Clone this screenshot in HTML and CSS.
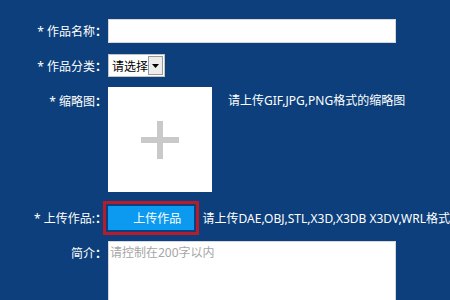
FILE: index.html
```html
<!DOCTYPE html>
<html lang="zh-CN">
<head>
<meta charset="utf-8">
<title>上传作品</title>
<link rel="stylesheet" href="styles.css">
</head>
<body>
<form class="form">
  <div class="row r-name">
    <label class="lbl">* 作品名称<span class="colon">：</span></label>
    <input class="text-input" type="text">
  </div>
  <div class="row r-cat">
    <label class="lbl">* 作品分类<span class="colon">：</span></label>
    <div class="select"><span class="sel-text">请选择</span><span class="sel-arrow"><svg width="7" height="4" viewBox="0 0 7 4"><path d="M0 0H7L3.5 4Z" fill="#000"/></svg></span></div>
  </div>
  <div class="row r-thumb">
    <label class="lbl lbl-top">* 缩略图<span class="colon">：</span></label>
    <div class="thumb">
      <svg width="38" height="38" viewBox="0 0 38 38"><rect x="16" y="0" width="6" height="38" fill="#c9c9c9"/><rect x="0" y="16" width="38" height="6" fill="#c9c9c9"/></svg>
    </div>
    <span class="hint hint-thumb">请上传GIF,JPG,PNG格式的缩略图</span>
  </div>
  <div class="row r-upload">
    <label class="lbl">* 上传作品:<span class="colon">：</span></label>
    <button class="upload-btn" type="button">上传作品</button>
    <span class="hint hint-upload">请上传DAE,OBJ,STL,X3D,X3DB X3DV,WRL格式</span>
  </div>
  <div class="row r-intro">
    <label class="lbl lbl-top">简介<span class="colon">：</span></label>
    <textarea class="textarea" placeholder="请控制在200字以内"></textarea>
  </div>
</form>
</body>
</html>
```
FILE: styles.css
```css
html, body {
  margin: 0;
  padding: 0;
  height: 100%;
  overflow: hidden;
}
body {
  background: #0c3f7b;
  font-family: "Noto Sans", "Noto Sans CJK SC", sans-serif;
  font-size: 12px;
  color: #fff;
}
.form {
  display: flex;
  flex-direction: column;
  padding-top: 19px;
}
.row {
  display: flex;
  align-items: center;
  white-space: nowrap;
}
.lbl {
  width: 107px;
  flex: none;
  text-align: right;
  line-height: 17px;
  margin-right: 1px;
}
.colon {
  font-family: "Noto Sans CJK TC", sans-serif;
  font-weight: bold;
}
.lbl-top {
  align-self: flex-start;
}
.text-input {
  width: 288px;
  height: 24px;
  box-sizing: border-box;
  border: 1px solid #d8d8d8;
  background: #fff;
  margin: 0;
  padding: 0 3px;
  font: inherit;
}
.r-cat {
  margin-top: 11px;
}
.select {
  width: 57px;
  height: 23px;
  box-sizing: border-box;
  background: #fff;
  display: flex;
  align-items: center;
  border: 1px solid #c4c4c4;
}
.sel-text {
  color: #000;
  padding-left: 3px;
  flex: 1;
  font-size: 12px;
}
.sel-arrow {
  width: 16px;
  height: 19px;
  margin-right: 1px;
  box-sizing: border-box;
  background: #ececec;
  border: 1px solid #9a9a9a;
  display: flex;
  align-items: center;
  justify-content: center;
}
.r-thumb {
  margin-top: 10px;
}
.r-thumb .lbl {
  margin-top: 5px;
}
.thumb {
  width: 104px;
  height: 105px;
  background: #fff;
  display: flex;
  align-items: center;
  justify-content: center;
}
.hint-thumb {
  align-self: flex-start;
  margin-top: 5px;
  margin-left: 16px;
  line-height: 17px;
}
.r-upload {
  margin-top: 14px;
}
.upload-btn {
  width: 86px;
  height: 24px;
  margin: 0;
  border: none;
  background: #0b9af0;
  color: #fff;
  font: inherit;
  padding: 0 0 0 13px;
  text-align: center;
  outline: 3px solid #b41d2b;
  outline-offset: 2px;
}
.hint-upload {
  margin-left: 9px;
}
.r-intro {
  margin-top: 11px;
}
.r-intro .lbl {
  margin-top: 3px;
}
.textarea {
  width: 288px;
  height: 90px;
  box-sizing: border-box;
  border: 1px solid #d8d8d8;
  margin: 0;
  padding: 2px 1px;
  font: inherit;
  line-height: 17px;
  resize: none;
  background: #fff;
}
.textarea::placeholder {
  color: #a6a6a6;
}
```
